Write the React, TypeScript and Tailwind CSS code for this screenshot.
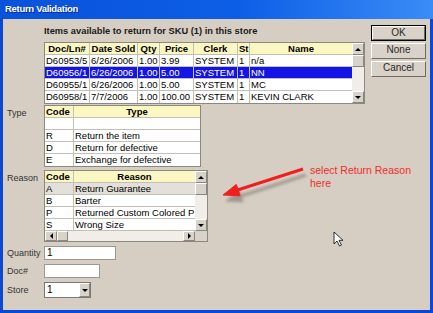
import React from 'react';

const font = "font-['Liberation_Sans',Arial,sans-serif]";

function Tri({ dir }: { dir: 'up' | 'down' | 'left' | 'right' }) {
  if (dir === 'up') return <div className="w-0 h-0 border-x-[3px] border-x-transparent border-b-[3px] border-b-black" />;
  if (dir === 'down') return <div className="w-0 h-0 border-x-[3px] border-x-transparent border-t-[3px] border-t-black" />;
  if (dir === 'left') return <div className="w-0 h-0 border-y-[3px] border-y-transparent border-r-[3px] border-r-black" />;
  return <div className="w-0 h-0 border-y-[3px] border-y-transparent border-l-[3px] border-l-black" />;
}

function SBtn({ dir, className = '' }: { dir?: 'up' | 'down' | 'left' | 'right'; className?: string }) {
  return (
    <div className={`flex items-center justify-center bg-[#d8d3ca] border border-t-white border-l-white border-r-[#8a857d] border-b-[#8a857d] ${className}`}>
      {dir && <Tri dir={dir} />}
    </div>
  );
}

type Row = { cells: string[]; selected?: boolean; gray?: boolean };

function GridRow({ cells, widths, header, selected, gray, last, center }: {
  cells: string[]; widths: number[]; header?: boolean; selected?: boolean; gray?: boolean; last?: boolean; center?: boolean[];
}) {
  const bg = header ? 'bg-[#fbf7c2]' : selected ? 'bg-[#1414e6] text-white' : gray ? 'bg-[#e3e0d9]' : 'bg-white';
  return (
    <div className={`flex h-[12px] ${last ? '' : 'border-b border-[#c4bfb6]'} ${bg}`}>
      {cells.map((c, i) => (
        <div
          key={i}
          style={{ width: widths[i] }}
          className={`shrink-0 overflow-hidden whitespace-nowrap px-[1px] leading-[11px] ${i < cells.length - 1 ? 'border-r border-[#c4bfb6]' : 'flex-1'} ${header ? 'font-bold text-[9.5px]' : 'text-[9.5px]'} ${center && center[i] ? 'text-center' : ''}`}
        >
          {c}
        </div>
      ))}
    </div>
  );
}

const itemRows: Row[] = [
  { cells: ['D60953/5', '6/26/2006', '1.00', '3.99', 'SYSTEM', '1', 'n/a'] },
  { cells: ['D60956/1', '6/26/2006', '1.00', '5.00', 'SYSTEM', '1', 'NN'], selected: true },
  { cells: ['D60955/1', '6/26/2006', '1.00', '5.00', 'SYSTEM', '1', 'MC'] },
  { cells: ['D60958/1', '7/7/2006', '1.00', '100.00', 'SYSTEM', '1', 'KEVIN CLARK'] },
];

const typeRows: Row[] = [
  { cells: ['', ''] },
  { cells: ['R', 'Return the item'] },
  { cells: ['D', 'Return for defective'] },
  { cells: ['E', 'Exchange for defective'] },
];

const reasonRows: Row[] = [
  { cells: ['A', 'Return Guarantee'], gray: true },
  { cells: ['B', 'Barter'] },
  { cells: ['P', 'Returned Custom Colored P'] },
  { cells: ['S', 'Wrong Size'] },
];

function Button({ label, def }: { label: string; def?: boolean }) {
  return (
    <div className={`w-[55px] h-[16px] ${def ? 'border border-black' : ''}`}>
      <div className="h-full bg-[#d8d2c8] border border-t-white border-l-white border-r-[#6e6a64] border-b-[#6e6a64] text-[10px] leading-[12px] text-center text-[#2a2a2a]">
        {label}
      </div>
    </div>
  );
}

export default function App() {
  const itemW = [45, 48, 22, 34, 44, 12, 102];
  return (
    <div className={`relative w-[433px] h-[313px] bg-[#0b47d9] px-[3px] pb-[3px] flex flex-col ${font}`}>
      <div className="-mx-[3px] h-[19px] shrink-0 bg-[linear-gradient(to_right,#0a52da,#0d5ee6_55%,#3a8cf6)] flex items-center pl-[5px]">
        <span className="text-white font-bold text-[9.5px] tracking-[-0.3px] [text-shadow:1px_1px_0_#0a2a90]">Return Validation</span>
      </div>
      <div className="flex-1 bg-[#d6cec3] flex text-black">
        <div className="w-[363px] flex flex-col">
          <div className="mt-[7px] ml-[41px] h-[11px] leading-[11px] text-[9.3px] font-bold text-[#1a1a1a] whitespace-nowrap">
            Items available to return for SKU (1) in this store
          </div>
          <div className="mt-[5px] ml-[41px] w-[321px] border border-[#8c8880] flex">
            <div className="w-[307px] flex flex-col">
              <GridRow header cells={['Doc/Ln#', 'Date Sold', 'Qty', 'Price', 'Clerk', 'St', 'Name']} widths={itemW} center={[true, true, true, true, true, false, true]} />
              {itemRows.map((r, i) => (
                <GridRow key={i} cells={r.cells} widths={itemW} selected={r.selected} last={i === itemRows.length - 1} />
              ))}
            </div>
            <div className="w-[12px] flex flex-col">
              <SBtn dir="up" className="h-[12px]" />
              <SBtn className="h-[12px]" />
              <div className="flex-1 bg-[#f1eee9]" />
              <SBtn dir="down" className="h-[12px]" />
            </div>
          </div>

          <div className="mt-[1px] flex">
            <div className="w-[41px] pl-[4px] pt-[3px] text-[9px] leading-[11px] text-[#333]">Type</div>
            <div className="w-[157px] border border-[#8c8880] flex flex-col">
              <GridRow header cells={['Code', 'Type']} widths={[29, 126]} center={[false, true]} />
              {typeRows.map((r, i) => (
                <GridRow key={i} cells={r.cells} widths={[29, 126]} last={i === typeRows.length - 1} />
              ))}
            </div>
          </div>

          <div className="mt-[3px] flex">
            <div className="w-[41px] pl-[4px] pt-[3px] text-[9px] leading-[11px] text-[#333]">Reason</div>
            <div className="w-[164px] border border-[#8c8880] flex flex-col">
              <div className="flex">
                <div className="w-[150px] flex flex-col">
                  <GridRow header cells={['Code', 'Reason']} widths={[29, 121]} center={[false, true]} />
                  {reasonRows.map((r, i) => (
                    <GridRow key={i} cells={r.cells} widths={[29, 121]} gray={r.gray} />
                  ))}
                </div>
                <div className="w-[12px] flex flex-col">
                  <SBtn dir="up" className="h-[12px]" />
                  <SBtn className="h-[12px]" />
                  <div className="flex-1 bg-[#f1eee9]" />
                  <SBtn dir="down" className="h-[12px]" />
                </div>
              </div>
              <div className="flex h-[10px]">
                <SBtn dir="left" className="w-[12px]" />
                <SBtn className="w-[11px]" />
                <div className="flex-1 bg-[#f1eee9]" />
                <SBtn dir="right" className="w-[12px]" />
                <div className="w-[12px] bg-[#d8d3ca]" />
              </div>
            </div>
          </div>

          <div className="mt-[4px] flex items-center h-[14px]">
            <div className="w-[41px] pl-[4px] text-[9px] leading-[11px] text-[#333]">Quantity</div>
            <div className="w-[72px] h-[14px] bg-white border border-[#9c988f] text-[10px] leading-[12px] pl-[2px]">1</div>
          </div>
          <div className="mt-[4px] flex items-center h-[14px]">
            <div className="w-[41px] pl-[4px] text-[9px] leading-[11px] text-[#333]">Doc#</div>
            <div className="w-[56px] h-[14px] bg-white border border-[#9c988f]" />
          </div>
          <div className="mt-[4px] flex items-center h-[16px]">
            <div className="w-[41px] pl-[4px] text-[9px] leading-[11px] text-[#333]">Store</div>
            <div className="w-[47px] h-[16px] bg-white border border-[#7c7870] flex">
              <div className="flex-1 text-[10px] leading-[14px] pl-[2px]">1</div>
              <SBtn dir="down" className="w-[11px]" />
            </div>
          </div>
        </div>

        <div className="ml-[5px] mt-[6px] flex flex-col gap-[2px]">
          <Button label="OK" def />
          <Button label="None" />
          <Button label="Cancel" />
        </div>
      </div>

      <svg className="absolute left-0 top-0 pointer-events-none" width="433" height="313" viewBox="0 0 433 313">
        <defs>
          <filter id="sh" x="-20%" y="-50%" width="140%" height="200%">
            <feGaussianBlur stdDeviation="1.8" />
          </filter>
        </defs>
        <g fill="#6f6a63" stroke="#6f6a63" opacity="0.55" filter="url(#sh)" transform="translate(3 6)">
          <line x1="303" y1="169" x2="238" y2="190" strokeWidth="3" />
          <polygon points="223,195 236.3,184.4 240.1,195.8" />
        </g>
        <g fill="#f21d1d" stroke="#f21d1d">
          <line x1="303" y1="169" x2="236" y2="190.5" strokeWidth="3" />
          <polygon points="223,195 236.3,184.4 240.1,195.8" strokeWidth="1" />
        </g>
        <path d="M334 232 L334 244 L337 241 L339.5 246 L341.5 245 L339 240.3 L343 240.3 Z" fill="white" stroke="black" strokeWidth="0.8" />
      </svg>
      <div className="absolute left-[310px] top-[164px] text-[10.5px] leading-[13px] text-[#f52a2a] pointer-events-none">
        <div>select Return Reason</div>
        <div>here</div>
      </div>
    </div>
  );
}
